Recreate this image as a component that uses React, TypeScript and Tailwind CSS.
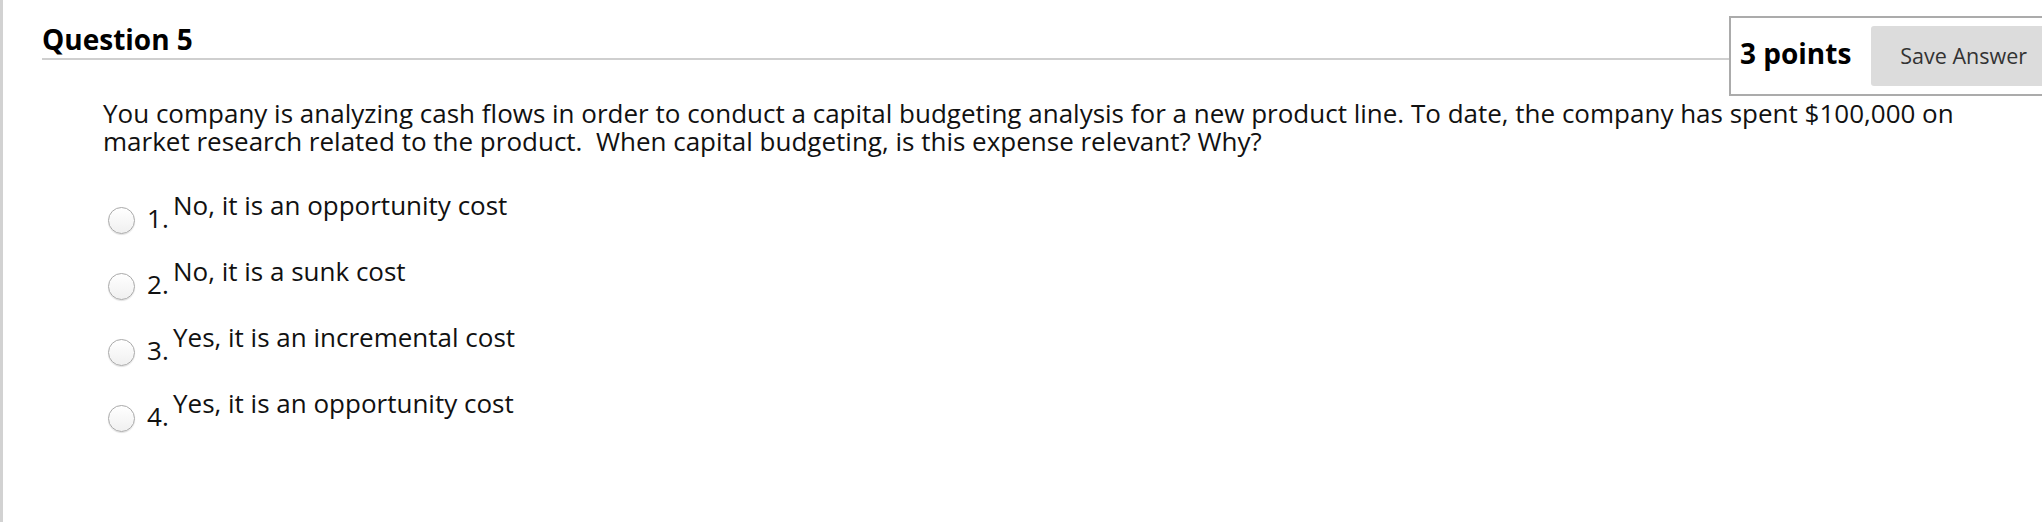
const options = [
  "No, it is an opportunity cost",
  "No, it is a sunk cost",
  "Yes, it is an incremental cost",
  "Yes, it is an opportunity cost",
]

function Radio() {
  return (
    <div className="mt-[16px] h-[27px] w-[27px] shrink-0 rounded-full border border-[#a9a9a9] bg-gradient-to-b from-white to-[#f0f0f0] shadow-[0_1px_1px_rgba(0,0,0,0.12)]" />
  )
}

export default function App() {
  return (
    <div
      className="h-[522px] w-full overflow-hidden border-l-[3px] border-[#d2d2d2] bg-white text-[#111]"
      style={{ fontFamily: '"Open Sans", "Liberation Sans", sans-serif' }}
    >
      {/* header: title + points box */}
      <div className="flex items-start pt-[16px]">
        <h2 className="ml-[39px] mt-[5px] flex-1 border-b-2 border-[#cfcfcf] pb-[1px] text-[28px] font-bold leading-[36px] text-black">
          Question 5
        </h2>
        <div className="mr-[-24px] flex h-[80px] shrink-0 items-center gap-[20px] border-2 border-[#ababab] bg-white pl-[9px] pr-[8px]">
          <span className="pb-[6px] text-[28px] font-bold leading-[36px] text-black">3 points</span>
          <button className="h-[60px] rounded-[3px] bg-[#dcdcdc] px-[29px] text-[21.5px] text-[#333]">
            Save Answer
          </button>
        </div>
      </div>

      {/* question text */}
      <p className="ml-[100px] mt-[3px] w-[1880px] text-[26px] leading-[28px]">
        You company is analyzing cash flows in order to conduct a capital budgeting analysis for a new product line. To
        date, the company has spent $100,000 on market research related to the product.&nbsp; When capital budgeting, is
        this expense relevant? Why?
      </p>

      {/* answer options */}
      <ul className="ml-[105px] mt-[36px]">
        {options.map((opt, i) => (
          <li key={i} className="flex h-[66px] items-start text-[26px] leading-[28px]">
            <Radio />
            <span className="ml-[12px] mt-[13px] w-[26px]">{i + 1}.</span>
            <span>{opt}</span>
          </li>
        ))}
      </ul>
    </div>
  )
}
